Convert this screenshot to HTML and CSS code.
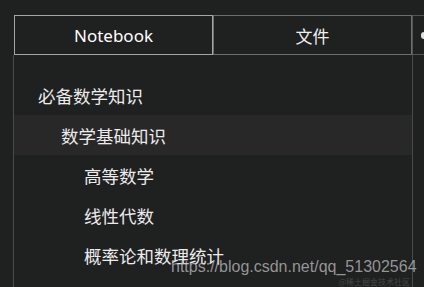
FILE: index.html
```html
<!DOCTYPE html>
<html>
<head>
<meta charset="utf-8">
<link rel="stylesheet" href="styles.css">
</head>
<body>
<div class="app">
  <div class="tabs">
    <div class="tab tab-active">Notebook</div>
    <div class="tab">文件</div>
    <div class="tab tab-more"><span class="dot"></span></div>
  </div>
  <div class="panel">
    <ul class="tree">
      <li class="row lvl1">必备数学知识</li>
      <li class="row lvl2 selected">数学基础知识</li>
      <li class="row lvl3">高等数学</li>
      <li class="row lvl3">线性代数</li>
      <li class="row lvl3">概率论和数理统计</li>
    </ul>
  </div>
  <div class="watermark">https://blog.csdn.net/qq_51302564</div>
  <div class="wm-small">@稀土掘金技术社区</div>
</div>
</body>
</html>
```
FILE: styles.css
```css
html, body {
  margin: 0;
  padding: 0;
  background: #1f2020;
  width: 424px;
  height: 287px;
  overflow: hidden;
}
.app {
  position: relative;
  width: 424px;
  height: 287px;
  padding-top: 15px;
  box-sizing: border-box;
  overflow: hidden;
  font-family: "Noto Sans CJK SC", "Noto Sans", sans-serif;
  color: #ececec;
}
.tabs {
  display: flex;
  padding-left: 14px;
  height: 40px;
}
.tab {
  flex: 0 0 auto;
  width: 199px;
  height: 40px;
  box-sizing: border-box;
  border: 1px solid #6e6e6e;
  display: flex;
  align-items: center;
  justify-content: center;
  font-family: "Noto Sans", "Noto Sans CJK SC", sans-serif;
  font-size: 17px;
  color: #f0f0f0;
}
.tab-active {
  border-color: #a6a6a6;
  color: #ffffff;
}
.tab-more {
  width: 12px;
  border-color: #555555;
  border-right: none;
  justify-content: flex-start;
  padding-left: 8px;
}
.dot {
  width: 3px;
  height: 7px;
  border-radius: 4px 0 0 4px;
  background: #e0e0e0;
}
.panel {
  margin-left: 13px;
  width: 400px;
  height: 232px;
  box-sizing: border-box;
  border-left: 1px solid #4a4a4a;
  border-right: 1px solid #4a4a4a;
  padding-top: 20px;
}
.tree {
  list-style: none;
  margin: 0;
  padding: 0;
}
.row {
  height: 40px;
  display: flex;
  align-items: center;
  font-size: 17.5px;
  color: #ececec;
  white-space: nowrap;
}
.lvl1 { padding-left: 24px; }
.lvl2 { padding-left: 47px; }
.lvl3 { padding-left: 70px; }
.selected {
  background: #282828;
}
.watermark {
  position: absolute;
  left: 171px;
  top: 257px;
  font-family: "Liberation Sans", Arial, sans-serif;
  font-size: 16px;
  line-height: 20px;
  color: rgba(190, 190, 190, 0.75);
  white-space: nowrap;
}
.wm-small {
  position: absolute;
  right: 14px;
  top: 277px;
  font-family: "Noto Sans CJK SC", sans-serif;
  font-size: 8px;
  line-height: 9px;
  color: rgba(150, 150, 150, 0.35);
  white-space: nowrap;
}
```
